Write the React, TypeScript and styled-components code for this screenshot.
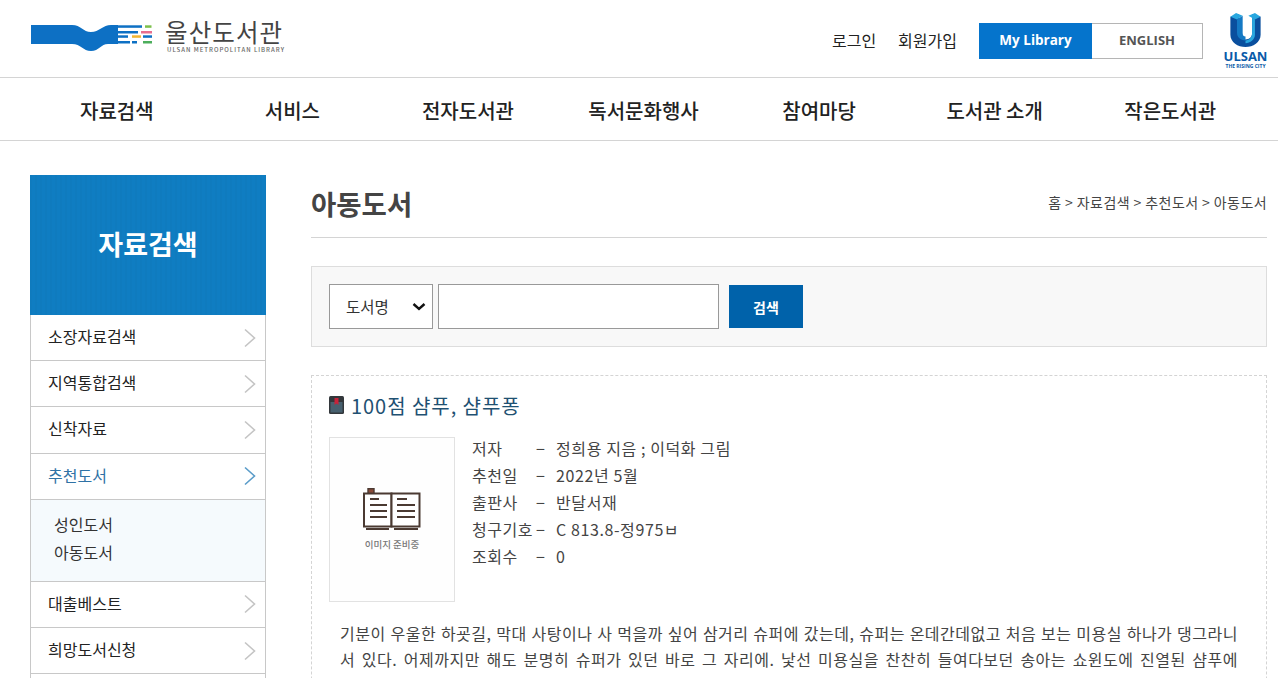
import styled, { createGlobalStyle } from "styled-components";

const GlobalStyle = createGlobalStyle`
html, body {
    margin: 0;
    padding: 0;
    height: 678px;
    overflow: hidden;
    background: #fff;
}
body {
    font-family: "Noto Sans CJK KR", "Noto Sans", sans-serif;
    color: #333;
}
* {
    box-sizing: border-box;
}
ul {
    list-style: none;
    margin: 0;
    padding: 0;
}
`

const navItems = ["자료검색", "서비스", "전자도서관", "독서문화행사", "참여마당", "도서관 소개", "작은도서관"];

const infoRows = [
    ["저자", "정희용 지음 ; 이덕화 그림"],
    ["추천일", "2022년 5월"],
    ["출판사", "반달서재"],
    ["청구기호", "C 813.8-정975ㅂ"],
    ["조회수", "0"],
];

function Chevron({ active }: { active?: boolean }) {
    return (
        <ChevronIcon width="12" height="20" viewBox="0 0 12 20" fill="none">
            <path d="M1 1.5 L10.5 10 L1 18.5" stroke={active ? "#5a9cc9" : "#c4c4c4"} strokeWidth="1.6" />
        </ChevronIcon>
    );
}

function LogoMark() {
    return (
        <svg width="122" height="26" viewBox="0 0 122 26">
            <path d="M0 0 H41 C50 0 52 7 60 7 C68 7 72 0 80 0 H87 V19 H77 C70 19 68 26 60 26 C52 26 50 19 41 19 H0 Z" fill="#0d70c4" />
            <g fill="#0d70c4">
                <rect x="87" y="0.3" width="24" height="2.5" />
                <rect x="87" y="6" width="20" height="2.5" />
                <rect x="87" y="10.3" width="10" height="2.5" />
                <rect x="87" y="16" width="12" height="2.5" />
                <rect x="101" y="16" width="5" height="2.5" />
                <rect x="112" y="10.3" width="9" height="2.5" />
            </g>
            <rect x="114" y="0.3" width="6.5" height="2.5" fill="#7cc04b" />
            <rect x="110" y="6" width="11" height="2.5" fill="#e86f8f" />
            <rect x="101" y="10.3" width="9" height="2.5" fill="#f2b632" />
            <rect x="112" y="16" width="9" height="2.5" fill="#4cae5c" />
        </svg>
    );
}

function UlsanMark() {
    return (
        <svg width="33" height="34" viewBox="0 0 34 36">
            <path d="M1 4 L10 1 V21 C10 26 13 28 17 28 C21 28 24 26 24 21 V1 L33 4 V23 C33 31 25 36 17 36 C9 36 1 31 1 23 Z" fill="#0a4f9e" />
            <path d="M1 4 L7 0 L14 3 L8 7 Z M20 3 L27 0 L33 4 L27 7 Z" fill="#29a7df" />
            <path d="M8 7 L14 3 V21 C14 24 15 25 17 25 V29 C12 29 8 26 8 21 Z" fill="#1479c4" />
            <path d="M27 7 V23 C27 28 22 32 17 32 V29 C21 29 24 26 24 21 V4 Z" fill="#29a7df" />
        </svg>
    );
}

function NoImage() {
    return (
        <svg width="58" height="42" viewBox="0 0 58 42" fill="none">
            <rect x="5" y="0.7" width="6" height="5" fill="#8a4a38" stroke="#4b3a32" strokeWidth="1.4" />
            <rect x="1" y="5.5" width="27.5" height="33" stroke="#4b3a32" strokeWidth="2" fill="#fff" />
            <rect x="28.5" y="5.5" width="28" height="33" stroke="#4b3a32" strokeWidth="2" fill="#fff" />
            <path d="M7 11 H16 M7 17 H24 M7 23 H24 M7 29 H24 M34 11 H44 M34 17 H52 M34 23 H52 M34 29 H52" stroke="#4b3a32" strokeWidth="2" />
            <path d="M3 41 H26 M31 41 H55" stroke="#4b3a32" strokeWidth="2" />
        </svg>
    );
}

function BookIcon() {
    return (
        <svg width="15" height="18" viewBox="0 0 15 18">
            <rect x="0" y="0" width="15" height="18" rx="1.5" fill="#33373b" />
            <rect x="1.5" y="6" width="12" height="10.5" fill="#47606f" />
            <path d="M5.5 2 H9.5 V9 L7.5 7.5 L5.5 9 Z" fill="#c8233b" />
        </svg>
    );
}

export default function App() {
    return (
        <>
            <GlobalStyle />
            <Header>
                <Logo>
                    <LogoMark />
                    <LogoText>
                        <LogoTitle>울산도서관</LogoTitle>
                        <LogoSub>ULSAN METROPOLITAN LIBRARY</LogoSub>
                    </LogoText>
                </Logo>
                <Utility>
                    <UtilLink>로그인</UtilLink>
                    <UtilLink>회원가입</UtilLink>
                    <LangGroup>
                        <MyLibrary>My Library</MyLibrary>
                        <English>ENGLISH</English>
                    </LangGroup>
                    <CityMark>
                        <UlsanMark />
                        <CityName>ULSAN</CityName>
                        <CitySlogan>THE RISING CITY</CitySlogan>
                    </CityMark>
                </Utility>
            </Header>

            <Nav>
                {navItems.map((item) => (
                    <NavItem key={item}>{item}</NavItem>
                ))}
            </Nav>

            <Main>
                <Sidebar>
                    <SideHead>자료검색</SideHead>
                    <SideList>
                        <SideItem>소장자료검색<Chevron /></SideItem>
                        <SideItem>지역통합검색<Chevron /></SideItem>
                        <SideItem>신착자료<Chevron /></SideItem>
                        <SideItem $active>추천도서<Chevron active /></SideItem>
                        <SubList>
                            <SubItem>성인도서</SubItem>
                            <SubItem>아동도서</SubItem>
                        </SubList>
                        <SideItem>대출베스트<Chevron /></SideItem>
                        <SideItem>희망도서신청<Chevron /></SideItem>
                        <SideItem />
                    </SideList>
                </Sidebar>

                <Content>
                    <TitleRow>
                        <PageTitle>아동도서</PageTitle>
                        <Breadcrumb>홈 &gt; 자료검색 &gt; 추천도서 &gt; 아동도서</Breadcrumb>
                    </TitleRow>

                    <SearchBox>
                        <SelectWrap>
                            <FieldSelect defaultValue="도서명">
                                <option>도서명</option>
                                <option>저자</option>
                            </FieldSelect>
                            <SelectArrow width="14" height="8" viewBox="0 0 14 8" fill="none">
                                <path d="M1.5 1 L7 6 L12.5 1" stroke="#111" strokeWidth="2.4" />
                            </SelectArrow>
                        </SelectWrap>
                        <SearchInput />
                        <SearchButton>검색</SearchButton>
                    </SearchBox>

                    <BookCard>
                        <BookTitle>
                            <BookIcon />
                            100점 샴푸, 샴푸퐁
                        </BookTitle>
                        <BookBody>
                            <Cover>
                                <NoImage />
                                <CoverLabel>이미지 준비중</CoverLabel>
                            </Cover>
                            <InfoList>
                                {infoRows.map(([label, value]) => (
                                    <InfoRow key={label}>
                                        <InfoLabel>{label}</InfoLabel>
                                        <InfoDash>−</InfoDash>
                                        <InfoValue>{value}</InfoValue>
                                    </InfoRow>
                                ))}
                            </InfoList>
                        </BookBody>
                        <Summary>
                            기분이 우울한 하굣길, 막대 사탕이나 사 먹을까 싶어 삼거리 슈퍼에 갔는데, 슈퍼는 온데간데없고 처음 보는 미용실 하나가 댕그라니 서 있다. 어제까지만 해도 분명히 슈퍼가 있던 바로 그 자리에. 낯선 미용실을 찬찬히 들여다보던 송아는 쇼윈도에 진열된 샴푸에
                        </Summary>
                    </BookCard>
                </Content>
            </Main>
        </>
    );
}

const Header = styled.header`
display: flex;
align-items: flex-start;
justify-content: space-between;
height: 78px;
padding: 0 11px 0 31px;
border-bottom: 1px solid #d4d4d4;
`
const Logo = styled.div`
display: flex;
align-items: flex-start;
gap: 12px;
padding-top: 25px;
`
const LogoText = styled.div`
display: flex;
flex-direction: column;
margin-top: -7px;
`
const LogoTitle = styled.span`
font-size: 24.5px;
line-height: 28px;
letter-spacing: 1.1px;
color: #444;
`
const LogoSub = styled.span`
font-size: 6px;
line-height: 8px;
font-weight: 500;
letter-spacing: 1px;
color: #666;
white-space: nowrap;
margin-left: 2px;
`
const Utility = styled.div`
display: flex;
align-items: flex-start;
padding-top: 23px;
`
const UtilLink = styled.a`
font-size: 16px;
line-height: 35px;
color: #222;
margin-right: 22px;
`
const LangGroup = styled.div`
display: flex;
height: 36px;
`
const MyLibrary = styled.a`
display: flex;
align-items: center;
justify-content: center;
width: 113px;
padding-bottom: 2px;
background: #0574cc;
color: #fff;
font-family: "Open Sans", sans-serif;
font-size: 13.5px;
font-weight: 700;
`
const English = styled.a`
display: flex;
align-items: center;
justify-content: center;
width: 111px;
padding-bottom: 2px;
border: 1px solid #b5b5b5;
border-left: 0;
color: #555;
font-family: "Open Sans", sans-serif;
font-size: 13px;
font-weight: 700;
`
const CityMark = styled.div`
display: flex;
flex-direction: column;
align-items: center;
width: 43px;
margin: -10px 0 0 21px;
`
const CityName = styled.span`
font-family: "Open Sans", sans-serif;
font-size: 13px;
line-height: 14px;
font-weight: 700;
color: #0a5aa8;
margin-top: 2px;
`
const CitySlogan = styled.span`
font-family: "Open Sans", sans-serif;
font-size: 5px;
line-height: 6px;
font-weight: 700;
color: #0a5aa8;
white-space: nowrap;
`
const Nav = styled.nav`
display: flex;
height: 63px;
padding: 0 20px 0 29px;
border-bottom: 1px solid #d4d4d4;
`
const NavItem = styled.a`
flex: 1;
text-align: center;
font-size: 20px;
line-height: 65px;
font-weight: 500;
color: #222;
`
const Main = styled.main`
display: flex;
gap: 45px;
padding: 34px 11px 0 30px;
`
const Sidebar = styled.aside`
flex: 0 0 236px;
`
const SideHead = styled.h2`
display: flex;
align-items: center;
justify-content: center;
height: 140px;
margin: 0;
padding-bottom: 3px;
background-color: #0f7dc2;
background-image: repeating-linear-gradient(90deg, rgba(0, 0, 0, 0.018) 0 2px, transparent 2px 5px);
color: #fff;
font-size: 27px;
font-weight: 700;
`
const SideList = styled.ul`
border-left: 1px solid #c8c8c8;
border-right: 1px solid #c8c8c8;
`
const SideItem = styled.li<{ $active?: boolean }>`
display: flex;
align-items: center;
justify-content: space-between;
height: 46.2px;
padding: 0 9px 3px 17px;
border-bottom: 1px solid #c8c8c8;
font-size: 16px;
color: ${(props) => (props.$active ? "#2f72a5" : "#222")};
`
const ChevronIcon = styled.svg`
margin-top: 3px;
`
const SubList = styled.ul`
display: flex;
flex-direction: column;
gap: 5px;
height: 82px;
padding: 13px 23px 0;
background: #f5fafd;
border-bottom: 1px solid #c8c8c8;
`
const SubItem = styled.li`
font-size: 16px;
line-height: 23px;
color: #333;
`
const Content = styled.div`
flex: 1;
min-width: 0;
`
const TitleRow = styled.div`
display: flex;
align-items: center;
justify-content: space-between;
height: 63px;
border-bottom: 1px solid #d4d4d4;
padding-bottom: 6px;
`
const PageTitle = styled.h1`
margin: 0;
font-size: 27.5px;
font-weight: 700;
color: #444;
`
const Breadcrumb = styled.span`
margin-bottom: 2px;
font-size: 14px;
letter-spacing: 0.42px;
color: #444;
`
const SearchBox = styled.div`
display: flex;
align-items: center;
height: 81px;
margin-top: 28px;
padding: 0 17px;
background: #f8f8f8;
border: 1px solid #ddd;
`
const SelectWrap = styled.div`
position: relative;
width: 104px;
height: 45px;
`
const FieldSelect = styled.select`
appearance: none;
width: 100%;
height: 100%;
padding: 0 16px 2px;
background: #fff;
border: 1px solid #999;
border-radius: 0;
font-family: inherit;
font-size: 15.5px;
color: #333;
`
const SelectArrow = styled.svg`
position: absolute;
right: 7px;
top: 19px;
pointer-events: none;
`
const SearchInput = styled.input`
width: 281px;
height: 45px;
margin-left: 5px;
background: #fff;
border: 1px solid #999;
`
const SearchButton = styled.button`
width: 74px;
height: 43px;
margin-left: 10px;
background: #0062aa;
border: 0;
color: #fff;
font-family: inherit;
font-size: 14px;
font-weight: 700;
`
const BookCard = styled.section`
min-height: 400px;
margin-top: 28px;
padding: 14px 17px 0;
border: 1px dashed #d4d4d4;
`
const BookTitle = styled.h3`
display: flex;
align-items: center;
gap: 7px;
height: 30px;
margin: 0;
font-size: 20px;
font-weight: 400;
letter-spacing: 0.95px;
color: #1f5172;
`
const BookBody = styled.div`
display: flex;
gap: 17px;
margin-top: 17px;
`
const Cover = styled.div`
display: flex;
flex-direction: column;
align-items: center;
justify-content: center;
width: 126px;
height: 165px;
background: #fefefe;
border: 1px solid #e2e2e2;
`
const CoverLabel = styled.span`
margin-top: 7px;
font-size: 9.5px;
line-height: 15px;
font-weight: 500;
color: #777;
`
const InfoList = styled.ul`
margin-top: -2px;
`
const InfoRow = styled.li`
display: flex;
font-size: 16px;
line-height: 27px;
letter-spacing: 0.5px;
color: #444;
`
const InfoLabel = styled.span`
width: 64px;
white-space: nowrap;
`
const InfoDash = styled.span`
width: 20px;
`
const InfoValue = styled.span`
letter-spacing: 0.6px;
`
const Summary = styled.p`
margin: 18px 0 0;
padding: 0 11px;
font-size: 16px;
line-height: 26.2px;
letter-spacing: 0.5px;
text-align: justify;
text-align-last: justify;
color: #444;
`
